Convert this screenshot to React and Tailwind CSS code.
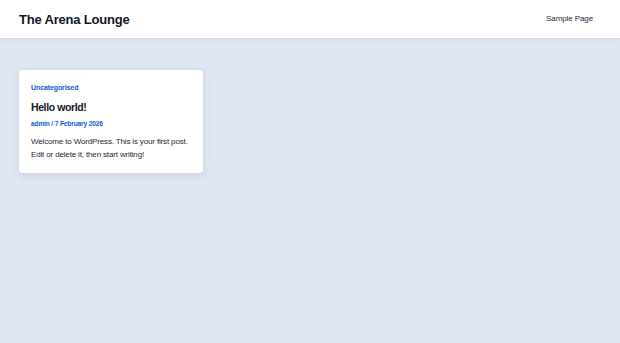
export default function App() {
  return (
    <div className="min-h-[343px] bg-[#dfe7f1] font-['Liberation_Sans',Arial,sans-serif]">
      <header className="flex h-[39px] items-center justify-between border-b border-[#d3dbe5] bg-white px-[19px] shadow-[0_1px_3px_rgba(0,0,0,0.06)]">
        <h1 className="text-[13px] font-bold leading-none tracking-[-0.2px] text-[#111827]">The Arena Lounge</h1>
        <nav className="pr-[8px] text-[8px] font-medium tracking-[-0.1px] text-[#1f2937]">Sample Page</nav>
      </header>

      <main className="px-[19px] pt-[31px]">
        <article className="w-[184px] rounded-[4px] bg-white px-[12px] pb-[12px] pt-[13px] shadow-[0_2px_8px_rgba(30,50,90,0.12)]">
          <p className="text-[7px] font-bold leading-[9px] tracking-[-0.1px] text-[#0b5bd3]">Uncategorised</p>
          <h2 className="mt-[8px] text-[10.5px] font-bold leading-[14px] tracking-[-0.4px] text-[#111827]">Hello world!</h2>
          <p className="mt-[5px] text-[6.5px] font-bold leading-[9px] tracking-[-0.1px] text-[#0b5bd3]">admin / 7 February 2026</p>
          <p className="mt-[7px] text-[8px] leading-[13px] tracking-[-0.15px] text-[#1f2937]">
            Welcome to WordPress. This is your first post. Edit or delete it, then start writing!
          </p>
        </article>
      </main>
    </div>
  );
}
